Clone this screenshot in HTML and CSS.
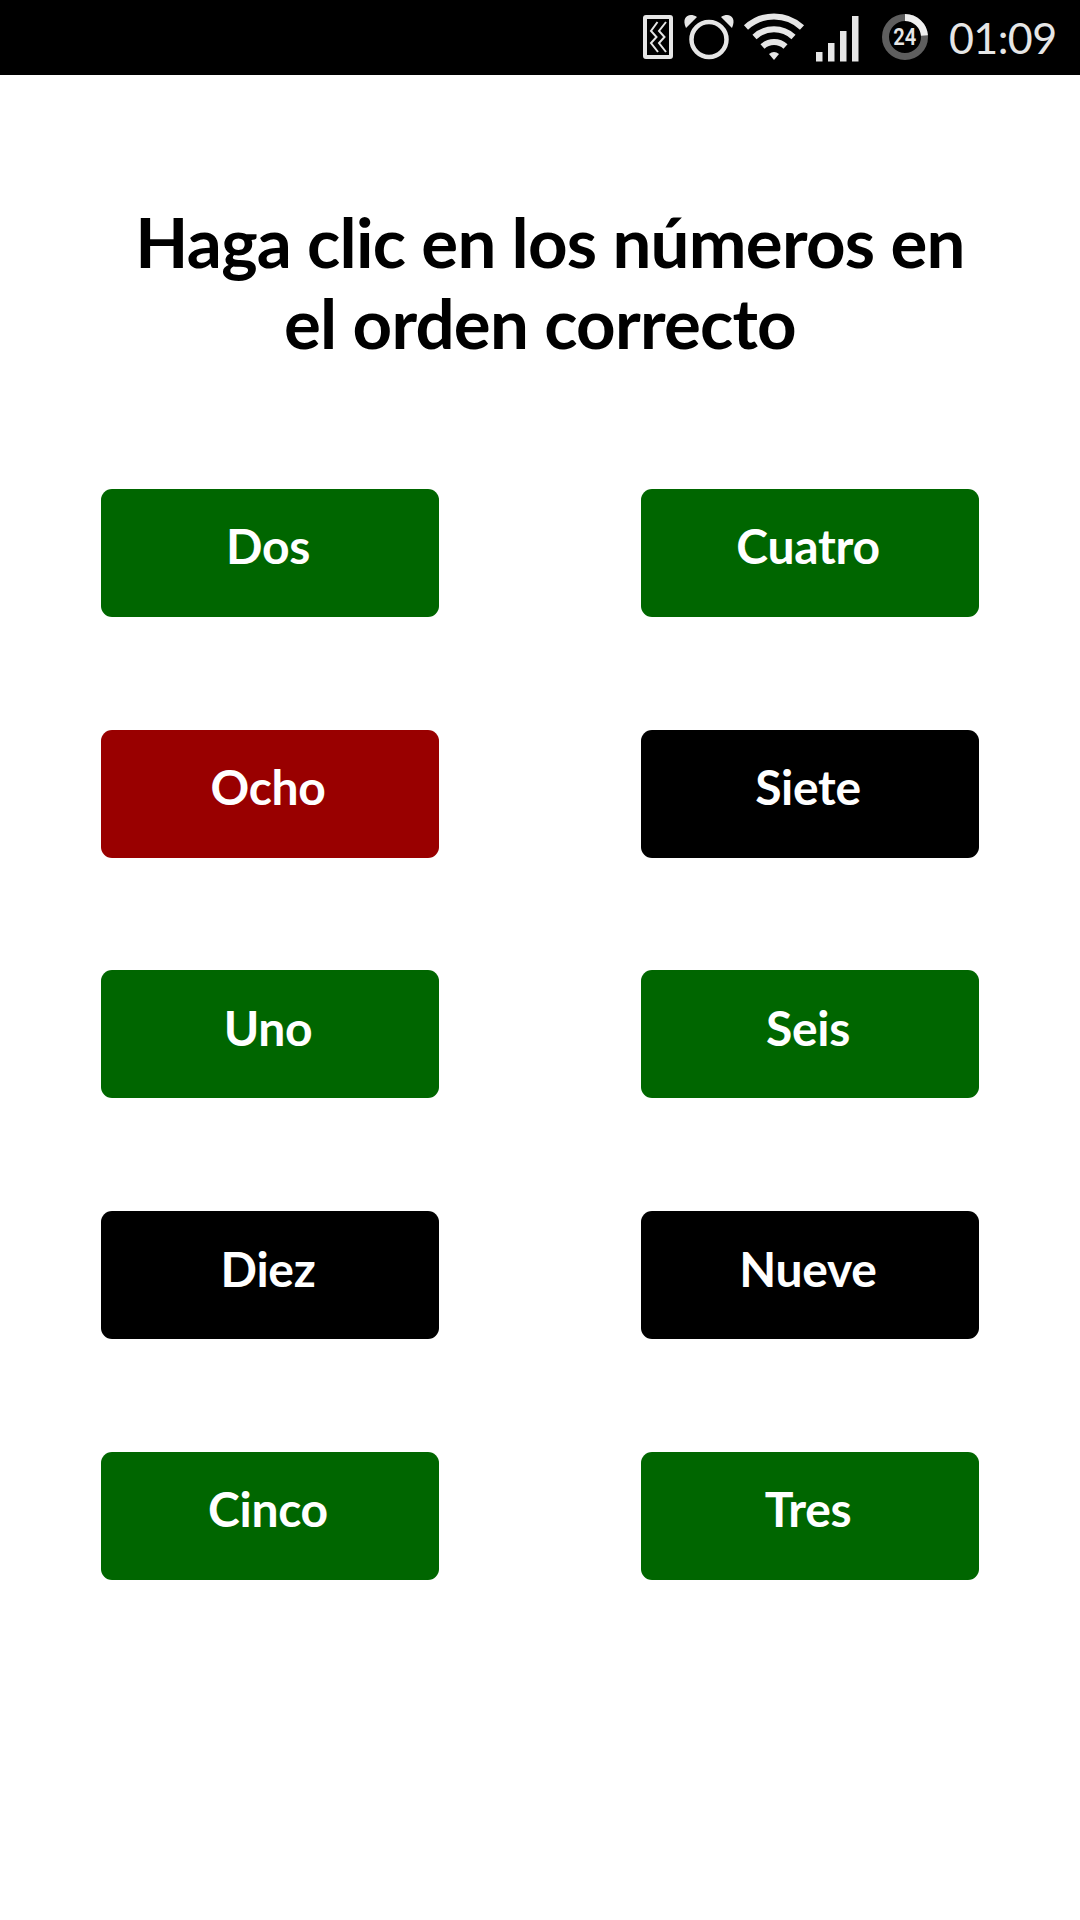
FILE: index.html
```html
<!DOCTYPE html>
<html lang="es">
<head>
  <meta charset="UTF-8" />
  <title>Números</title>
  <link rel="stylesheet" href="styles.css">
</head>
<body>
  <!-- Status bar -->
  <header class="status-bar">
    <svg class="status-icons" width="260" height="75" viewBox="630 0 260 75">
      <!-- vibrate -->
      <rect x="645" y="17" width="26" height="40" rx="1" fill="none" stroke="#e6e6e6" stroke-width="4" />
      <path d="M657.500 22 L651 31 L656.500 37 L651 43 L658 52 M666 22 L659 31 L664.500 37 L659 43 L666 52" fill="none" stroke="#e6e6e6" stroke-width="2" />
      <!-- alarm -->
      <circle cx="709" cy="39.500" r="17.500" fill="none" stroke="#e6e6e6" stroke-width="4.500" />
      <path d="M686 28 C681 17 689 12 697 17 Z M732 28 C737 17 729 12 721 17 Z" fill="#e6e6e6" />
      <!-- wifi -->
      <g fill="none" stroke="#e6e6e6" stroke-width="6">
        <path d="M746 27.500 A41 41 0 0 1 802 27.500" />
        <path d="M754.500 37 A28.500 28.500 0 0 1 793.500 37" />
        <path d="M762.500 46.500 A17 17 0 0 1 785.500 46.500" />
      </g>
      <path d="M769 54 Q774 50 779 54 L774 60 Z" fill="#e6e6e6" />
      <!-- signal -->
      <path d="M816 52h6.500v9.500H816z M828 43h6.500v18.500H828z M840 31h6.500v30.500H840z M852 16h6.500v45.500H852z" fill="#e6e6e6" />
    </svg>
    <div class="battery">
      <svg width="46" height="46" viewBox="0 0 46 46">
        <circle cx="23" cy="23" r="19.500" fill="none" stroke="#5e5e5e" stroke-width="7" />
        <path d="M23 3.500 A19.500 19.500 0 0 1 42.450 21.600" fill="none" stroke="#efefef" stroke-width="7" />
      </svg>
      <span class="battery-level">24</span>
    </div>
    <span class="clock">01:09</span>
  </header>

  <main class="game">
    <h1 class="title">Haga clic en los números en<br>el orden correcto</h1>

    <div class="numbers">
      <button class="number correct">Dos</button>
      <button class="number correct">Cuatro</button>
      <button class="number wrong">Ocho</button>
      <button class="number">Siete</button>
      <button class="number correct">Uno</button>
      <button class="number correct">Seis</button>
      <button class="number">Diez</button>
      <button class="number">Nueve</button>
      <button class="number correct">Cinco</button>
      <button class="number correct">Tres</button>
    </div>
  </main>
</body>
</html>
```
FILE: styles.css
```css
* {
  box-sizing: border-box;
}
body {
  margin: 0;
  height: 1920px;
  overflow: hidden;
  background-color: #fff;
  font-family: Lato, sans-serif;
}

/* Status bar */
.status-bar {
  display: flex;
  align-items: center;
  height: 75px;
  padding-left: 630px;
  background-color: #000;
  color: #e6e6e6;
}
.status-icons {
  flex: none;
  margin-right: -8px;
}
.battery {
  display: grid;
  place-items: center;
  width: 46px;
  height: 46px;
  margin-top: -1px;
}
.battery svg,
.battery-level {
  grid-area: 1 / 1;
}
.battery-level {
  font-family: Roboto, sans-serif;
  font-size: 24px;
  font-weight: 600;
  line-height: 46px;
  transform: scaleX(0.84);
}
.clock {
  margin-left: 21px;
  font-size: 43px;
  line-height: 75px;
  letter-spacing: -0.6px;
}

/* Title */
.title {
  margin: 0;
  padding-top: 126px;
  font-size: 69px;
  font-weight: 700;
  line-height: 81px;
  letter-spacing: -0.75px;
  text-align: center;
  text-indent: 20px;
  white-space: nowrap;
}

/* Number buttons */
.numbers {
  display: grid;
  grid-template-columns: 337.5px 337.5px;
  grid-auto-rows: 128px;
  gap: 112.75px 202.5px;
  padding: 125.95px 101.25px 0;
}
.number {
  margin: 0;
  padding: 0 4px 14px 0;
  border: 0;
  border-radius: 11px;
  background-color: #000;
  color: #fff;
  font-family: inherit;
  font-size: 48px;
  font-weight: 700;
  letter-spacing: -0.3px;
}
.correct {
  background-color: #060;
}
.wrong {
  background-color: #900;
}
```
